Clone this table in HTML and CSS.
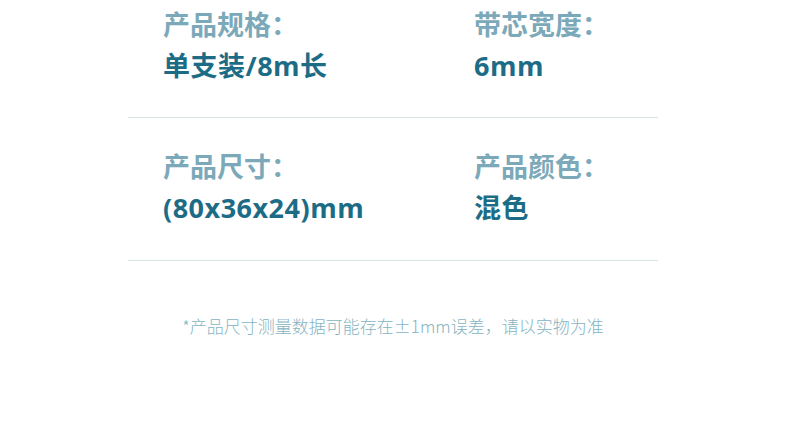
FILE: index.html
```html
<!DOCTYPE html>
<html lang="zh-CN">
<head>
<meta charset="utf-8">
<link rel="stylesheet" href="styles.css">
</head>
<body>
<div class="spec">
  <div class="row row-first">
    <div class="cell">
      <div class="label">产品规格：</div>
      <div class="value">单支装/8m长</div>
    </div>
    <div class="cell">
      <div class="label">带芯宽度：</div>
      <div class="value">6mm</div>
    </div>
  </div>
  <div class="row">
    <div class="cell">
      <div class="label">产品尺寸：</div>
      <div class="value">(80x36x24)mm</div>
    </div>
    <div class="cell">
      <div class="label">产品颜色：</div>
      <div class="value">混色</div>
    </div>
  </div>
  <p class="note">*产品尺寸测量数据可能存在±1mm误差，请以实物为准</p>
</div>
</body>
</html>
```

FILE: styles.css
```css
html, body {
  margin: 0;
  padding: 0;
  background: #ffffff;
}
body {
  font-family: "Noto Sans CJK SC", "Noto Sans", sans-serif;
}
.spec {
  width: 530px;
  margin-left: 128px;
}
.row {
  display: grid;
  grid-template-columns: 311px 1fr;
  padding: 27px 0 31px 35px;
  border-bottom: 1px solid #d6e3e5;
}
.row-first {
  padding-top: 3px;
  padding-bottom: 30px;
}
.label {
  font-size: 27px;
  line-height: 42px;
  font-weight: 700;
  color: #7ca9b9;
}
.value {
  font-family: "Open Sans", "Noto Sans CJK SC", sans-serif;
  font-size: 27px;
  line-height: 42px;
  font-weight: 700;
  letter-spacing: 0.5px;
  color: #1d6c86;
}
.note {
  margin: 53px 0 0;
  text-align: center;
  font-size: 17px;
  line-height: 24px;
  font-weight: 300;
  color: #86b4c2;
}
```
